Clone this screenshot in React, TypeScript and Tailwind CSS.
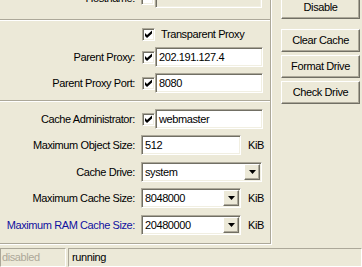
import React from "react";

const sunken =
  "border border-t-[#ACA899] border-l-[#ACA899] border-b-white border-r-white shadow-[inset_1px_1px_0_#716F64,inset_-1px_-1px_0_#F1EFE2]";
const raised =
  "border border-t-white border-l-white border-b-[#716F64] border-r-[#716F64] shadow-[inset_-1px_-1px_0_#ACA899]";

function Check({ checked = true }: { checked?: boolean }) {
  return (
    <div className={`w-[13px] h-[13px] bg-white shrink-0 ${sunken}`}>
      {checked && (
        <svg width="11" height="11" viewBox="0 0 11 11" className="block">
          <path d="M2 4 L4 6 L9 1.5 L9 4.5 L4 9 L2 7 Z" fill="#000" />
        </svg>
      )}
    </div>
  );
}

function Arrow() {
  return (
    <div className={`w-[16px] h-[16px] bg-[#ECE9D8] flex items-center justify-center shrink-0 ${raised}`}>
      <svg width="7" height="4" viewBox="0 0 7 4" className="block">
        <path d="M0 0 H7 L3.5 4 Z" fill="#000" />
      </svg>
    </div>
  );
}

function Label({ children, blue }: { children: React.ReactNode; blue?: boolean }) {
  return (
    <div className={`w-[136px] shrink-0 text-right pr-[1px] ${blue ? "text-[#1010A0]" : "text-black"}`}>
      {children}
    </div>
  );
}

function Input({ value, w, bg = "bg-white" }: { value: string; w: string; bg?: string }) {
  return (
    <div className={`${w} h-full ${bg} ${sunken} flex items-center pl-[3px] overflow-hidden whitespace-nowrap`}>
      {value}
    </div>
  );
}

function Combo({ value, w }: { value: string; w: string }) {
  return (
    <div className={`${w} h-full bg-white ${sunken} flex items-center pl-[3px] pr-[1px] justify-between`}>
      <span>{value}</span>
      <Arrow />
    </div>
  );
}

function Sep({ mt }: { mt: string }) {
  return <div className={`${mt} h-[2px] border-t border-t-[#ACA899] border-b border-b-white w-[270px]`} />;
}

function Btn({ children, cls }: { children: React.ReactNode; cls: string }) {
  return (
    <div className={`w-[79px] h-[23px] bg-[#ECE9D8] flex items-center justify-center ${raised} ${cls}`}>
      {children}
    </div>
  );
}

export default function App() {
  return (
    <div
      className="w-[362px] h-[267px] bg-[#ECE9D8] overflow-hidden flex flex-col text-[11px] leading-none tracking-[-0.4px] text-black"
      style={{ fontFamily: '"Liberation Sans", Arial, sans-serif' }}
    >
      <div className="flex h-[245px] shrink-0">
        <div className="w-[272px] h-[245px] shrink-0 border-r border-r-white shadow-[inset_-1px_-1px_0_#ACA899] border-b border-b-white flex flex-col">
          <div className="-mt-[12px] h-[20px] flex items-center">
            <Label>Hostname:</Label>
            <div className="ml-[5px]"><Check checked={false} /></div>
            <div className="ml-[1px] h-full"><Input value="" w="w-[107px]" bg="bg-[#ECE9D8]" /></div>
          </div>
          <Sep mt="mt-[11px]" />
          <div className="mt-[3px] h-[20px] flex items-center">
            <div className="w-[142px] shrink-0" />
            <Check />
            <span className="ml-[6px]">Transparent Proxy</span>
          </div>
          <div className="mt-[3px] h-[20px] flex items-center">
            <Label>Parent Proxy:</Label>
            <div className="ml-[6px]"><Check /></div>
            <div className="h-full"><Input value="202.191.127.4" w="w-[108px]" /></div>
          </div>
          <div className="mt-[6px] h-[20px] flex items-center">
            <Label>Parent Proxy Port:</Label>
            <div className="ml-[6px]"><Check /></div>
            <div className="h-full"><Input value="8080" w="w-[108px]" /></div>
          </div>
          <Sep mt="mt-[7px]" />
          <div className="mt-[7px] h-[20px] flex items-center">
            <Label>Cache Administrator:</Label>
            <div className="ml-[6px]"><Check /></div>
            <div className="h-full"><Input value="webmaster" w="w-[108px]" /></div>
          </div>
          <div className="mt-[6px] h-[20px] flex items-center">
            <Label>Maximum Object Size:</Label>
            <div className="ml-[5px] h-full"><Input value="512" w="w-[100px]" /></div>
            <span className="ml-[7px]">KiB</span>
          </div>
          <div className="mt-[7px] h-[20px] flex items-center">
            <Label>Cache Drive:</Label>
            <div className="ml-[5px] h-full"><Combo value="system" w="w-[121px]" /></div>
          </div>
          <div className="mt-[6px] h-[20px] flex items-center">
            <Label>Maximum Cache Size:</Label>
            <div className="ml-[5px] h-full"><Combo value="8048000" w="w-[100px]" /></div>
            <span className="ml-[7px]">KiB</span>
          </div>
          <div className="mt-[7px] h-[20px] flex items-center">
            <Label blue>Maximum RAM Cache Size:</Label>
            <div className="ml-[5px] h-full"><Combo value="20480000" w="w-[100px]" /></div>
            <span className="ml-[7px]">KiB</span>
          </div>
        </div>
        <div className="flex flex-col pl-[9px]">
          <Btn cls="-mt-[4px]">Disable</Btn>
          <Btn cls="mt-[10px]">Clear Cache</Btn>
          <Btn cls="mt-[3px]">Format Drive</Btn>
          <Btn cls="mt-[3px]">Check Drive</Btn>
        </div>
      </div>
      <div className="flex flex-1 pt-[3px] gap-[2px]">
        <div className="w-[66px] h-full border border-t-[#ACA899] border-l-[#ACA899] border-b-white border-r-white flex items-center pl-[1px] text-[#ACA899]">
          disabled
        </div>
        <div className="flex-1 h-full border border-t-[#ACA899] border-l-[#ACA899] border-b-white border-r-white flex items-center pl-[3px]">
          running
        </div>
      </div>
    </div>
  );
}
